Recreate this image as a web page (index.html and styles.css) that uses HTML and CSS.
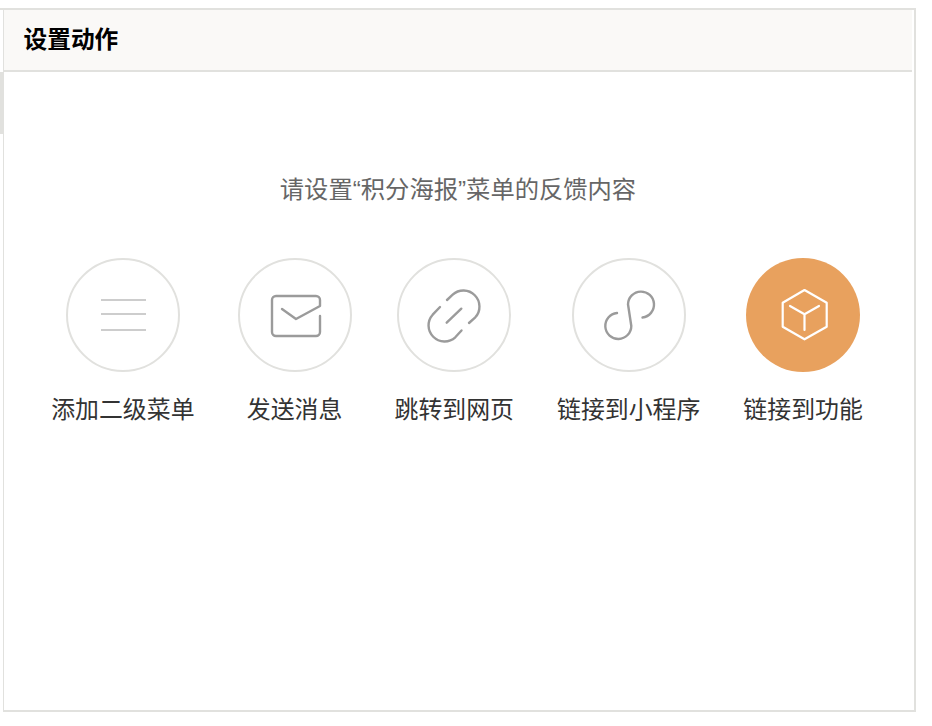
FILE: index.html
```html
<!DOCTYPE html>
<html lang="zh-CN">
<head>
  <meta charset="UTF-8">
  <meta name="viewport" content="width=device-width, initial-scale=1.0">
  <title>设置动作</title>
  <link rel="stylesheet" href="styles.css">
</head>
<body>
  <div class="panel">
    <div class="panel-header">
      <h2>设置动作</h2>
    </div>
    <div class="panel-body">
      <p class="tip">请设置“积分海报”菜单的反馈内容</p>
      <div class="actions">
        <div class="action">
          <div class="action-circle">
            <svg class="thin" viewBox="0 0 110 110"><path d="M33 40H78M33 54H78M33 70H78"/></svg>
          </div>
          <span>添加二级菜单</span>
        </div>
        <div class="action">
          <div class="action-circle">
            <svg viewBox="0 0 110 110"><path d="M80 56V72a4 4 0 0 1-4 4H36a4 4 0 0 1-4-4V40a4 4 0 0 1 4-4H76a4 4 0 0 1 4 4v6L56 59 42 49"/></svg>
          </div>
          <span>发送消息</span>
        </div>
        <div class="action">
          <div class="action-circle">
            <svg viewBox="0 0 110 110"><path d="M48 40L53.7 34.7A16 16 0 0 1 76.3 57.3L70 63M41 47L33.7 54.7A16 16 0 0 0 56.3 77.3L62.5 70.5M47.7 62.7L62.3 48.7"/></svg>
          </div>
          <span>跳转到网页</span>
        </div>
        <div class="action">
          <div class="action-circle">
            <svg viewBox="0 0 110 110"><path d="M43 53A13 13 0 1 0 57.3 66L54 44.3A13 13 0 1 1 68.5 57.5"/></svg>
          </div>
          <span>链接到小程序</span>
        </div>
        <div class="action active">
          <div class="action-circle">
            <svg viewBox="0 0 114 114"><path d="M58.5 32L80.7 44.7V68.7L58.5 81.3 36.7 68.7V44.7ZM44 48L58.5 56.3 73 48M58.5 56.3V72"/></svg>
          </div>
          <span>链接到功能</span>
        </div>
      </div>
    </div>
    <div class="side-mark"></div>
  </div>
</body>
</html>
```

FILE: styles.css
```css
body {
  margin: 0;
  padding: 8px 16px 14px 3px;
  background: #fff;
  font-family: "Liberation Sans", "Noto Sans CJK SC", sans-serif;
}
.panel {
  position: relative;
  height: 700px;
  border: 2px solid #e1e1de;
  border-left-width: 1px;
}
.panel::before {
  content: "";
  position: absolute;
  top: -2px;
  left: -4px;
  width: 4px;
  height: 2px;
  background: #e1e1de;
}
.side-mark {
  position: absolute;
  top: 62px;
  left: -4px;
  width: 4px;
  height: 62px;
  background: #e1e1de;
}
.panel-header {
  height: 60px;
  margin-right: 2px;
  padding-left: 19.5px;
  display: flex;
  align-items: center;
  background: #faf9f7;
  border-bottom: 2px solid #e1e1de;
}
.panel-header h2 {
  margin: -4px 0 0;
  font-size: 23.7px;
  font-weight: 700;
  color: #000;
}
.panel-body {
  margin-right: 2px;
}
.tip {
  margin: 0;
  padding-top: 100px;
  height: 36px;
  line-height: 36px;
  text-align: center;
  font-size: 24.3px;
  color: #666;
}
.actions {
  margin-top: 50px;
  padding-right: 2px;
  display: flex;
  justify-content: center;
  gap: 43px;
}
.action {
  display: flex;
  flex-direction: column;
  align-items: center;
  font-size: 23.9px;
  line-height: 36px;
  color: #333;
}
.action span {
  margin-top: 20px;
  white-space: nowrap;
}
.action-circle {
  width: 110px;
  height: 110px;
  border: 2px solid #e1e1de;
  border-radius: 50%;
}
.action-circle svg {
  display: block;
  width: 110px;
  height: 110px;
  fill: none;
  stroke: #9b9b9b;
  stroke-width: 2.4;
  stroke-linecap: round;
  stroke-linejoin: round;
}
.action-circle svg.thin {
  stroke-width: 1;
  stroke-linecap: butt;
}
.action.active .action-circle {
  width: 114px;
  height: 114px;
  border: 0;
  background: #e8a15e;
}
.action.active svg {
  width: 114px;
  height: 114px;
  stroke: #fff;
  stroke-width: 2.2;
}
```
